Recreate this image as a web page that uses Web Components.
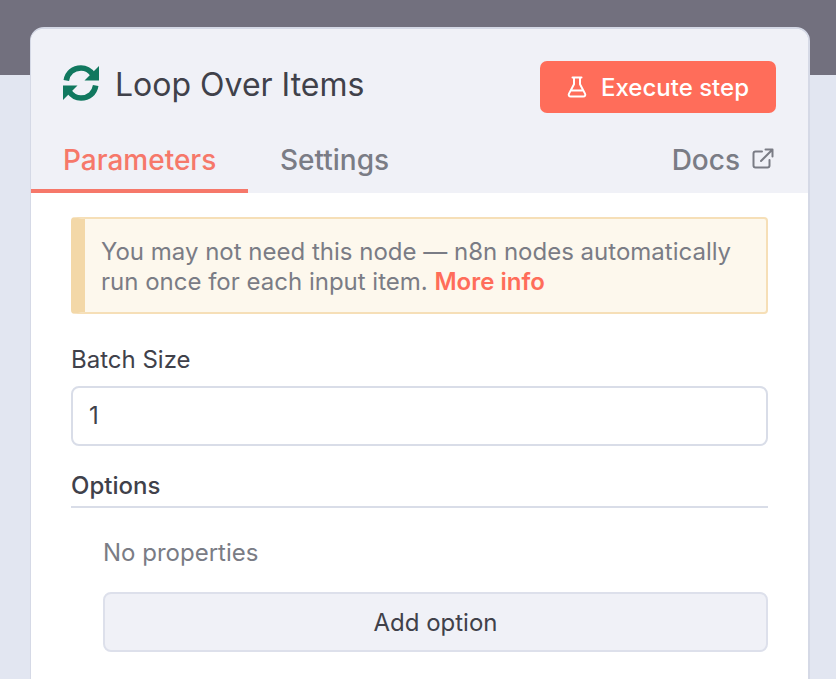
<!DOCTYPE html>
<html>
<head>
<meta charset="utf-8">
<title>Loop Over Items</title>
<style>
    html, body { margin: 0; height: 100%; }
    body {
        overflow: hidden;
        background: #e2e6f1;
        font-family: Inter, "Liberation Sans", sans-serif;
    }
</style>
</head>
<body>
<node-backdrop>
    <node-panel>
        <panel-header slot="header" title-text="Loop Over Items"></panel-header>
        <panel-tabs slot="header"></panel-tabs>
        <callout-box>You may not need this node — n8n nodes automatically run once for each input item. <a>More info</a></callout-box>
        <number-field label="Batch Size" value="1"></number-field>
        <options-section></options-section>
    </node-panel>
</node-backdrop>

<script>
class NodeBackdrop extends HTMLElement {
    constructor() {
        super();
        this.shadowDOM = this.attachShadow({mode: "open"});
        this.shadowDOM.innerHTML = `
        <style>
            :host {
                display: block;
                position: relative;
                height: 679px;
                box-sizing: border-box;
                padding: 27px 26px 0 30px;
                overflow: hidden;
            }
            .band {
                position: absolute;
                top: 0;
                left: 0;
                right: 0;
                height: 75px;
                background: #72707e;
            }
            .content { position: relative; height: 100%; }
        </style>
        <div class="band"></div>
        <div class="content"><slot></slot></div>
        `;
    }
}

class NodePanel extends HTMLElement {
    constructor() {
        super();
        this.shadowDOM = this.attachShadow({mode: "open"});
        this.shadowDOM.innerHTML = `
        <style>
            :host {
                display: flex;
                flex-direction: column;
                height: 700px;
                box-sizing: border-box;
                background: #fff;
                border: 2px solid #d5d9e6;
                border-left-width: 1px;
                border-radius: 14px 14px 0 0;
                overflow: hidden;
            }
            .top { background: #f0f1f7; }
            .body { padding: 24px 40px 0 40px; }
        </style>
        <div class="top"><slot name="header"></slot></div>
        <div class="body"><slot></slot></div>
        `;
    }
}

class PanelHeader extends HTMLElement {
    constructor() {
        super();
        this.shadowDOM = this.attachShadow({mode: "open"});
    }

    connectedCallback() {
        this.shadowDOM.innerHTML = `
        <style>
            :host {
                display: flex;
                align-items: center;
                justify-content: space-between;
                padding: 32px 32px 0 31px;
                height: 52px;
            }
            .name {
                display: flex;
                align-items: center;
                gap: 15px;
                color: #40414a;
                font-size: 32px;
                line-height: 40px;
            }
            .name span { margin-top: -4px; }
            svg.loop { display: block; margin-top: -8px; }
            button {
                display: flex;
                align-items: center;
                justify-content: center;
                gap: 14px;
                width: 236px;
                height: 52px;
                padding: 0;
                border: 0;
                border-radius: 7px;
                background: #ff6d5a;
                color: #fff;
                font: 500 24px Inter, "Liberation Sans", sans-serif;
            }
        </style>
        <div class="name">
            <svg class="loop" width="38" height="36" viewBox="0 0 38 36" fill="none" stroke="#11785f" stroke-width="5.600">
                <path d="M4.300 15.500C5.400 8 11.300 3 19 3c5 0 9 2.400 11.800 6.500"/>
                <path d="M37 1V15.500H22.500z" fill="#11785f" stroke="none"/>
                <path d="M33.700 20.500C32.600 28 26.700 33 19 33c-5 0-9-2.400-11.800-6.500"/>
                <path d="M1 35V20.500H15.500z" fill="#11785f" stroke="none"/>
            </svg>
            <span>${this.getAttribute("title-text")}</span>
        </div>
        <button>
            <svg width="20" height="22" viewBox="0 0 20 22" fill="none" stroke="#fff" stroke-width="2" stroke-linejoin="round" stroke-linecap="round">
                <path d="M5.500 1.500h9M7 1.500v6.800L2 17.600c-.8 1.500.1 3 1.800 3h12.400c1.700 0 2.600-1.500 1.800-3L13 8.300V1.500M4.600 14.500h10.800"/>
            </svg>
            <span>Execute step</span>
        </button>
        `;
    }
}

class PanelTabs extends HTMLElement {
    constructor() {
        super();
        this.shadowDOM = this.attachShadow({mode: "open"});
        this.shadowDOM.innerHTML = `
        <style>
            :host {
                display: flex;
                align-items: flex-end;
                height: 80px;
                font-size: 28px;
                font-weight: 500;
                color: #7a7c85;
            }
            .tab {
                box-sizing: border-box;
                height: 46px;
                padding: 0 32px;
                line-height: 26px;
            }
            .active {
                color: #f6786a;
                width: 217px;
                border-bottom: 4px solid #f6786a;
            }
            .settings { padding: 0 0 0 32px; }
            .docs {
                margin-left: auto;
                padding: 0 34px 0 0;
                display: flex;
                gap: 12px;
            }
            .docs svg { margin-top: 1px; }
        </style>
        <div class="tab active">Parameters</div>
        <div class="tab settings">Settings</div>
        <div class="tab docs">
            <span>Docs</span>
            <svg width="22" height="22" viewBox="0 0 22 22" fill="none" stroke="#7a7c85" stroke-width="2" stroke-linecap="round" stroke-linejoin="round">
                <path d="M10 3.500H3.500C2.400 3.500 1.500 4.400 1.500 5.500v12c0 1.100.9 2 2 2h12c1.100 0 2-.9 2-2V12M9 13L20 2M13.500 1.500H20.500V8.500"/>
            </svg>
        </div>
        `;
    }
}

class CalloutBox extends HTMLElement {
    constructor() {
        super();
        this.shadowDOM = this.attachShadow({mode: "open"});
        this.shadowDOM.innerHTML = `
        <style>
            :host {
                display: block;
                box-sizing: border-box;
                height: 97px;
                padding: 18px 20px 0 16px;
                background: #fdf8ed;
                border: 2px solid #f6dfb7;
                border-left: 14px solid #f3d8a8;
                border-radius: 4px;
                color: #7a7c85;
                font-size: 24px;
                line-height: 30px;
            }
            ::slotted(a) {
                color: #ff6d5a;
                font-weight: 600;
            }
        </style>
        <slot></slot>
        `;
    }
}

class NumberField extends HTMLElement {
    constructor() {
        super();
        this.shadowDOM = this.attachShadow({mode: "open"});
    }

    connectedCallback() {
        this.shadowDOM.innerHTML = `
        <style>
            :host {
                display: block;
                margin-top: 31px;
                color: #40414a;
            }
            label {
                display: block;
                font-size: 24px;
                line-height: 30px;
                margin-bottom: 11px;
            }
            .input {
                box-sizing: border-box;
                height: 60px;
                padding: 0 16px;
                border: 2px solid #d9dde8;
                border-radius: 8px;
                background: #fff;
                font-size: 24px;
                line-height: 56px;
            }
        </style>
        <label>${this.getAttribute("label")}</label>
        <div class="input">${this.getAttribute("value")}</div>
        `;
    }
}

class OptionsSection extends HTMLElement {
    constructor() {
        super();
        this.shadowDOM = this.attachShadow({mode: "open"});
        this.shadowDOM.innerHTML = `
        <style>
            :host {
                display: block;
                margin-top: 24px;
                color: #40414a;
                font-size: 24px;
            }
            .title {
                font-weight: 500;
                line-height: 32px;
                padding-bottom: 4px;
                border-bottom: 2px solid #d9dde8;
            }
            .inner { padding: 30px 0 0 32px; }
            .empty {
                color: #7a7c85;
                line-height: 30px;
                margin-bottom: 24px;
            }
            button {
                display: block;
                box-sizing: border-box;
                width: 100%;
                height: 60px;
                padding: 0;
                border: 2px solid #dde0eb;
                border-radius: 8px;
                background: #f0f1f7;
                color: #40414a;
                font: 400 24px Inter, "Liberation Sans", sans-serif;
            }
        </style>
        <div class="title">Options</div>
        <div class="inner">
            <div class="empty">No properties</div>
            <button>Add option</button>
        </div>
        `;
    }
}

customElements.define("node-backdrop", NodeBackdrop);
customElements.define("node-panel", NodePanel);
customElements.define("panel-header", PanelHeader);
customElements.define("panel-tabs", PanelTabs);
customElements.define("callout-box", CalloutBox);
customElements.define("number-field", NumberField);
customElements.define("options-section", OptionsSection);
</script>
</body>
</html>
